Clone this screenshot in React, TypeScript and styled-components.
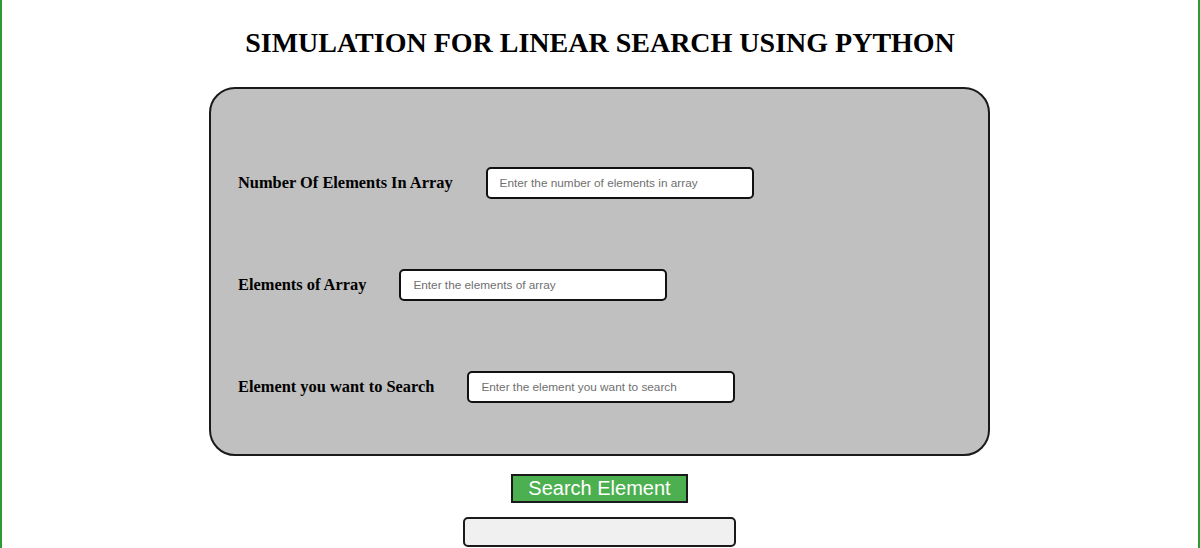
import styled, { createGlobalStyle } from 'styled-components';
import { useState } from 'react';

const GlobalStyle = createGlobalStyle`
  html, body {
    margin: 0;
    padding: 0;
    background: #ffffff;
  }
  body {
    font-family: 'Liberation Serif', 'Times New Roman', serif;
  }
`;

const Page = styled.div`
  box-sizing: border-box;
  min-height: 548px;
  border-left: 2px solid #2e9a34;
  border-right: 2px solid #2e9a34;
  display: flex;
  flex-direction: column;
  align-items: center;
  padding-top: 27px;
`;

const Title = styled.h1`
  margin: 0;
  font-family: 'Liberation Serif', 'Times New Roman', serif;
  font-size: 28px;
  font-weight: bold;
  color: #000;
  line-height: 32px;
`;

const Card = styled.div`
  box-sizing: border-box;
  width: 781px;
  height: 369px;
  margin-top: 28px;
  margin-left: -1px;
  background: #c0c0c0;
  border: 2px solid #1a1a1a;
  border-radius: 26px;
  padding: 78px 0 0 27px;
  display: flex;
  flex-direction: column;
  gap: 70px;
`;

const Row = styled.div`
  display: flex;
  align-items: center;
  gap: 33px;
`;

const Label = styled.label`
  font-family: 'Liberation Serif', 'Times New Roman', serif;
  font-size: 16.4px;
  font-weight: bold;
  color: #000;
`;

const Input = styled.input`
  box-sizing: border-box;
  width: 268px;
  height: 32px;
  border: 2px solid #111;
  border-radius: 5px;
  background: #fff;
  padding: 0 12px;
  font-family: 'Liberation Sans', Arial, sans-serif;
  font-size: 11.8px;
  outline: none;

  &::placeholder {
    color: #6f6f6f;
  }
`;

const SearchButton = styled.button`
  box-sizing: border-box;
  margin-top: 18px;
  margin-left: -1px;
  height: 29px;
  padding: 0 15px;
  background: #4caf50;
  border: 2px solid #1a1a1a;
  color: #fff;
  font-family: 'Liberation Sans', Arial, sans-serif;
  font-size: 20px;
  line-height: 23px;
  cursor: pointer;
`;

const Output = styled.div`
  box-sizing: border-box;
  width: 273px;
  height: 30px;
  margin-top: 14px;
  background: #f0f0f0;
  border: 2px solid #1a1a1a;
  border-radius: 5px;
  margin-left: -2px;
`;

const App = () => {
  const [count, setCount] = useState('');
  const [elements, setElements] = useState('');
  const [target, setTarget] = useState('');
  const [result, setResult] = useState('');

  const search = () => {
    const arr = elements.split(/[\s,]+/).filter(Boolean).slice(0, Number(count) || undefined);
    const idx = arr.indexOf(target.trim());
    setResult(idx >= 0 ? `Element found at index ${idx}` : 'Element not found');
  };

  return (
    <>
      <GlobalStyle />
      <Page>
        <Title>SIMULATION FOR LINEAR SEARCH USING PYTHON</Title>
        <Card>
          <Row>
            <Label>Number Of Elements In Array</Label>
            <Input
              placeholder='Enter the number of elements in array'
              value={count}
              onChange={(e) => setCount(e.target.value)}
            />
          </Row>
          <Row>
            <Label>Elements of Array</Label>
            <Input
              placeholder='Enter the elements of array'
              value={elements}
              onChange={(e) => setElements(e.target.value)}
            />
          </Row>
          <Row>
            <Label>Element you want to Search</Label>
            <Input
              placeholder='Enter the element you want to search'
              value={target}
              onChange={(e) => setTarget(e.target.value)}
            />
          </Row>
        </Card>
        <SearchButton onClick={search}>Search Element</SearchButton>
        <Output>{result}</Output>
      </Page>
    </>
  );
};

export default App;
